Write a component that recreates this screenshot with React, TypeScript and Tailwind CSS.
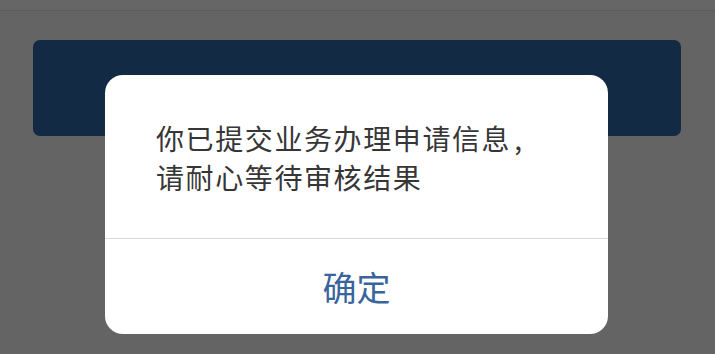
export default function App() {
  return (
    <div
      className="relative h-[354px] w-[715px] overflow-hidden bg-[#636463]"
      style={{ fontFamily: '"Noto Sans CJK SC", "Noto Sans", sans-serif' }}
    >
      <div className="h-[11px] border-b border-[#5a5b5a] bg-[#666666]" />
      <div className="pl-[33px] pr-[34px] pt-[29px]">
        <div className="h-[96px] rounded-[7px] bg-[#132a45]" />
      </div>

      <div className="absolute left-[105px] top-[75px] flex h-[259px] w-[503px] flex-col overflow-hidden rounded-[18px] bg-white">
        <div className="pl-[51px] pr-[20px] pt-[44px] pb-[42px] text-[28px] leading-[38.5px] tracking-[1.6px] text-[#363636]">
          <p>
            你已提交业务办理申请信息<span className="pl-[3px]">,</span>
          </p>
          <p>请耐心等待审核结果</p>
        </div>
        <div className="h-px bg-[#dadada]" />
        <button className="flex flex-1 items-center justify-center text-[34px] text-[#37659c]">
          确定
        </button>
      </div>
    </div>
  );
}
